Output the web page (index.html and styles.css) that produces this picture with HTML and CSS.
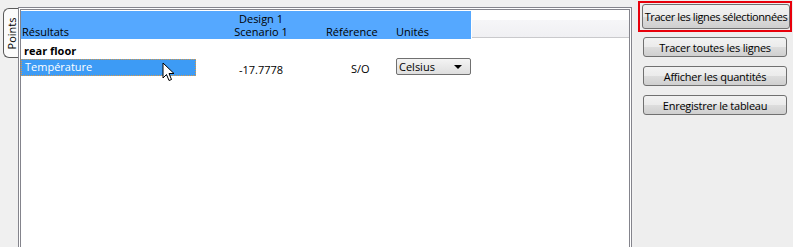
FILE: index.html
```html
<!DOCTYPE html>
<html lang="fr">
<head>
    <meta charset="UTF-8">
    <title>Résultats - Points</title>
    <link rel="stylesheet" href="styles.css">
</head>
<body>
    <div class="window">
        <div class="tabs">
            <div class="tab"><span>Points</span></div>
        </div>

        <div class="panel">
            <div class="grid">
                <div class="head">
                    <div class="cell col-name">Résultats</div>
                    <div class="cell col-value">
                        <div class="stack">
                            <span>Design 1</span>
                            <span>Scenario 1</span>
                        </div>
                    </div>
                    <div class="cell col-ref">Référence</div>
                    <div class="cell col-unit">Unités</div>
                    <div class="head-rest"></div>
                </div>

                <div class="row group">
                    <div class="cell col-name">rear floor</div>
                </div>

                <div class="row">
                    <div class="cell col-name selected">
                        Température
                        <svg class="cursor" width="13" height="20" viewBox="0 0 13 20">
                            <path d="M1 1 L1 16 L4.5 12.5 L7 18.5 L9.5 17.5 L7 11.5 L12 11.5 Z" fill="#fff" stroke="#000" stroke-width="1"/>
                        </svg>
                    </div>
                    <div class="cell col-value">-17.7778</div>
                    <div class="cell col-ref">S/O</div>
                    <div class="cell col-unit">
                        <div class="combo">
                            <span>Celsius</span>
                            <i class="arrow"></i>
                        </div>
                    </div>
                </div>
            </div>
        </div>

        <div class="sidebar">
            <div class="highlight">
                <button class="btn first">Tracer les lignes sélectionnées</button>
            </div>
            <button class="btn">Tracer toutes les lignes</button>
            <button class="btn">Afficher les quantités</button>
            <button class="btn">Enregistrer le tableau</button>
        </div>
    </div>
</body>
</html>
```

FILE: styles.css
```css
body {
    margin: 0;
    font-family: 'Open Sans', 'DejaVu Sans', sans-serif;
    font-size: 11px;
    color: #000;
    background: #f0f0f0;
}

.window {
    display: flex;
    height: 247px;
    overflow: hidden;
}

/* vertical tab strip */
.tabs {
    width: 18px;
    padding-top: 8px;
}

.tab {
    width: 16px;
    height: 50px;
    margin-left: 3px;
    box-sizing: border-box;
    border: 1px solid #5a5a5a;
    border-right: none;
    border-radius: 6px 0 0 6px;
    background: #fbfbfb;
    display: flex;
    align-items: center;
    justify-content: center;
}

.tab span {
    transform: rotate(-90deg);
    white-space: nowrap;
}

/* results table */
.panel {
    width: 614px;
    margin-top: 7px;
    box-sizing: border-box;
    border: 3px double #84848c;
    border-bottom: none;
    background: #fff;
}

.head {
    display: flex;
    height: 28px;
    margin-top: 1px;
}

.head .cell {
    background: #55a8ff;
    display: flex;
    align-items: flex-end;
    line-height: 13px;
    padding-bottom: 1px;
}

.stack {
    display: flex;
    flex-direction: column;
    align-items: center;
}

.head-rest {
    flex: 1;
    margin: 9px 0 0 1px;
    border-bottom: 1px solid #c9c9cc;
    background: linear-gradient(#f6f6f8, #f0f0f3);
    height: 17px;
}

.col-name {
    width: 175px;
    box-sizing: border-box;
    padding-left: 1px;
}

.col-value {
    width: 130px;
    justify-content: center;
    text-align: center;
}

.col-ref {
    width: 70px;
}

.col-unit {
    width: 75px;
}

.row {
    display: flex;
    align-items: center;
    height: 17px;
}

.row .col-value {
    display: flex;
    padding-top: 4px;
}

.row .col-ref {
    padding: 2px 0 0 25px;
    box-sizing: border-box;
}

.group {
    margin-top: 3px;
    font-weight: bold;
}

.group .col-name {
    padding-left: 3px;
}

.selected {
    position: relative;
    height: 17px;
    background: #3d9bf5;
    color: #fff;
    padding-left: 3px;
    border: 1px dotted #d89a4a;
    line-height: 14px;
}

.cursor {
    position: absolute;
    left: 140px;
    top: 2px;
}

/* combo box */
.combo {
    display: flex;
    align-items: center;
    justify-content: space-between;
    height: 17px;
    box-sizing: border-box;
    border: 1px solid #707070;
    border-radius: 2px;
    background: linear-gradient(#f4f4f4, #dedede);
    padding: 0 8px 0 2px;
    margin-top: -2px;
}

.arrow {
    width: 0;
    height: 0;
    border-left: 4px solid transparent;
    border-right: 4px solid transparent;
    border-top: 4px solid #000;
}

/* button column */
.sidebar {
    flex: 1;
    margin-left: 2px;
    padding: 1px 0 0 9px;
    display: flex;
    flex-direction: column;
    align-items: flex-start;
    gap: 9px;
    background: #eeeeee;
}

.highlight {
    margin: 0 0 -4px -5px;
    padding: 1px 0 1px 2px;
    border: 2px solid #e8000b;
}

.btn {
    width: 144px;
    height: 20px;
    padding: 0;
    font: inherit;
    letter-spacing: -0.25px;
    color: #000;
    white-space: nowrap;
    border: 1px solid #707070;
    border-radius: 3px;
    background: linear-gradient(#f2f2f2 0%, #ebebeb 50%, #dddddd 51%, #cfcfcf 100%);
}

.btn.first {
    display: block;
    width: 148px;
    height: 25px;
    letter-spacing: -0.4px;
}
```
